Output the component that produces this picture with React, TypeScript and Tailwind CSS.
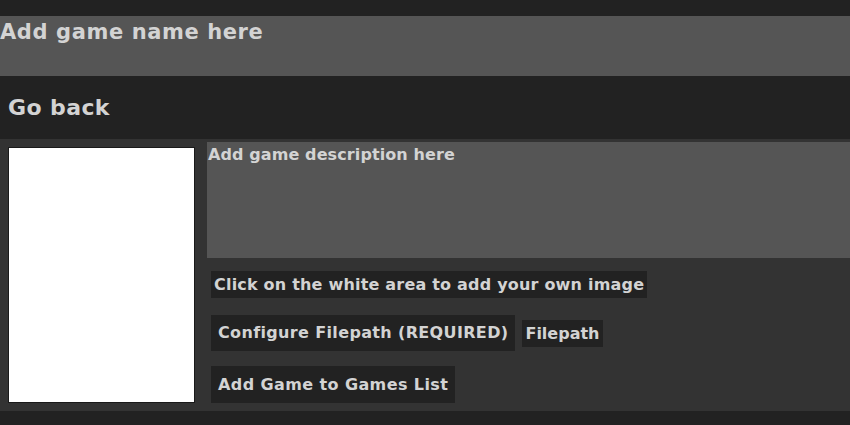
import React from "react";

const font = { fontFamily: '"DejaVu Sans", "Liberation Sans", sans-serif' };

export default function App() {
  return (
    <div className="min-h-[425px] bg-[#222222] pt-4 font-bold text-[#d3d3d3]" style={font}>
      {/* game name input */}
      <div className="h-[60px] bg-[#555555] text-[21px] leading-[32px] tracking-[0.6px]">Add game name here</div>

      {/* back link */}
      <div className="h-[63px] flex items-center px-2 text-[22px] tracking-[0.4px]">Go back</div>

      {/* editor panel */}
      <div className="flex bg-[#333333] pt-[3px] pb-2">
        <div className="ml-2 mt-[5px] h-[256px] w-[187px] shrink-0 border border-[#1a1a1a] bg-white" />
        <div className="ml-3 flex flex-1 flex-col">
          <div className="h-[116px] bg-[#555555] pl-px pt-[2px] text-[16px] leading-[22px] tracking-[0.1px]">
            Add game description here
          </div>
          <div className="ml-1 mt-[13px] flex flex-col items-start">
            <span className="bg-[#222222] px-[3px] text-[16px] leading-[27px] tracking-[0.2px]">
              Click on the white area to add your own image
            </span>
            <div className="mt-[17px] flex items-center gap-[7px]">
              <button className="h-[36px] bg-[#222222] px-[7px] text-[16px] font-bold tracking-[0.35px]">
                Configure Filepath (REQUIRED)
              </button>
              <span className="bg-[#222222] px-[3px] text-[16px] leading-[27px]">Filepath</span>
            </div>
            <button className="mt-[15px] h-[37px] bg-[#222222] px-[7px] text-[16px] font-bold tracking-[0.4px]">
              Add Game to Games List
            </button>
          </div>
        </div>
      </div>
    </div>
  );
}
